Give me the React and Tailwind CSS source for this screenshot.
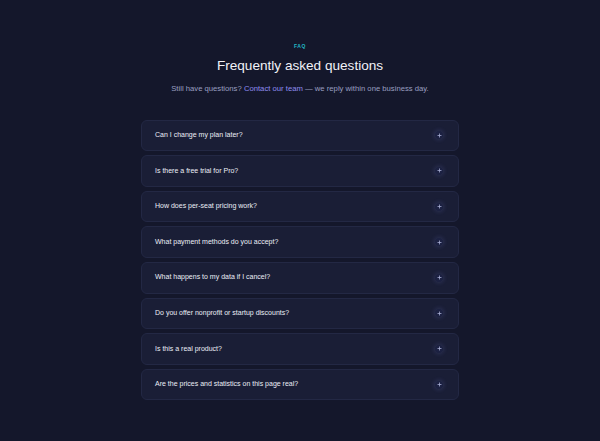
const FAQS = [
  "Can I change my plan later?",
  "Is there a free trial for Pro?",
  "How does per-seat pricing work?",
  "What payment methods do you accept?",
  "What happens to my data if I cancel?",
  "Do you offer nonprofit or startup discounts?",
  "Is this a real product?",
  "Are the prices and statistics on this page real?",
]

function PlusIcon() {
  return (
    <span className="flex h-[10px] w-[10px] flex-shrink-0 items-center justify-center rounded-full border border-[#242945] bg-[#1c2142] shadow-[0_0_4px_rgba(120,130,220,0.2)]">
      <svg width="5" height="5" viewBox="0 0 10 10" fill="none">
        <path d="M5 1.8v6.4M1.8 5h6.4" stroke="#aeb3da" strokeWidth="1.5" strokeLinecap="round" />
      </svg>
    </span>
  )
}

function FaqRow({ question }) {
  return (
    <div className="flex h-[31.6px] items-center justify-between rounded-[6px] border border-[#232844] bg-[#1a1e36] pl-[13px] pr-[14px]">
      <span className="text-[7px] font-medium text-[#eceef6]">{question}</span>
      <PlusIcon />
    </div>
  )
}

export default function App() {
  return (
    <div
      className="min-h-[441px] w-full bg-[#14172b] pt-[43px]"
      style={{ fontFamily: '"Liberation Sans", Arial, sans-serif' }}
    >
      <div className="mx-auto flex w-[318px] flex-col items-center">
        <p className="text-[5px] font-bold uppercase tracking-[0.12em] text-[#22b8c8]">
          FAQ
        </p>
        <h1 className="mt-[6px] text-[13.6px] font-normal leading-[18px] text-[#f1f2f8]">
          Frequently asked questions
        </h1>
        <p className="mt-[8px] whitespace-nowrap text-[7.7px] text-[#9a9fc0]">
          Still have questions?{" "}
          <a href="#" className="text-[#8f8cf0]">Contact our team</a>
          {" "}— we reply within one business day.
        </p>
        <div className="mt-[25.5px] flex w-full flex-col gap-[4px]">
          {FAQS.map(q => (
            <FaqRow key={q} question={q} />
          ))}
        </div>
      </div>
    </div>
  )
}
